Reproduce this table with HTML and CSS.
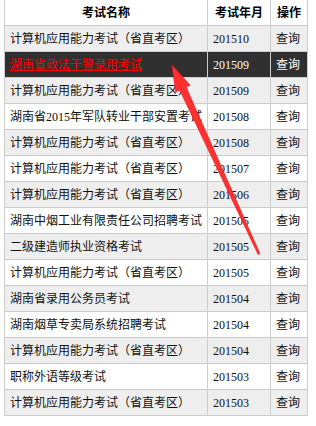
FILE: index.html
```html
<!DOCTYPE html>
<html lang="zh-CN">
<head>
<meta charset="utf-8">
<title>考试查询</title>
<link rel="stylesheet" href="styles.css">
</head>
<body>
<table class="exam-table">
  <colgroup>
    <col class="col-name">
    <col class="col-date">
    <col class="col-op">
  </colgroup>
  <thead>
    <tr><th>考试名称</th><th>考试年月</th><th>操作</th></tr>
  </thead>
  <tbody>
    <tr class="alt"><td><div class="name">计算机应用能力考试（省直考区）</div></td><td>201510</td><td>查询</td></tr>
    <tr class="active"><td><div class="name"><a class="link" href="#">湖南省政法干警录用考试</a></div></td><td>201509</td><td>查询</td></tr>
    <tr class="alt"><td><div class="name">计算机应用能力考试（省直考区）</div></td><td>201509</td><td>查询</td></tr>
    <tr><td><div class="name">湖南省2015年军队转业干部安置考试</div></td><td>201508</td><td>查询</td></tr>
    <tr class="alt"><td><div class="name">计算机应用能力考试（省直考区）</div></td><td>201508</td><td>查询</td></tr>
    <tr><td><div class="name">计算机应用能力考试（省直考区）</div></td><td>201507</td><td>查询</td></tr>
    <tr class="alt"><td><div class="name">计算机应用能力考试（省直考区）</div></td><td>201506</td><td>查询</td></tr>
    <tr><td><div class="name">湖南中烟工业有限责任公司招聘考试</div></td><td>201505</td><td>查询</td></tr>
    <tr class="alt"><td><div class="name">二级建造师执业资格考试</div></td><td>201505</td><td>查询</td></tr>
    <tr><td><div class="name">计算机应用能力考试（省直考区）</div></td><td>201505</td><td>查询</td></tr>
    <tr class="alt"><td><div class="name">湖南省录用公务员考试</div></td><td>201504</td><td>查询</td></tr>
    <tr><td><div class="name">湖南烟草专卖局系统招聘考试</div></td><td>201504</td><td>查询</td></tr>
    <tr class="alt"><td><div class="name">计算机应用能力考试（省直考区）</div></td><td>201504</td><td>查询</td></tr>
    <tr><td><div class="name">职称外语等级考试</div></td><td>201503</td><td>查询</td></tr>
    <tr class="alt"><td><div class="name">计算机应用能力考试（省直考区）</div></td><td>201503</td><td>查询</td></tr>
  </tbody>
</table>
<svg class="arrow" width="316" height="426" viewBox="0 0 316 426" aria-hidden="true">
  <polygon points="172,65 190.2,85.3 186.1,87.1 259.9,253.6 258.1,254.4 179.7,90.1 175.6,91.9" fill="#ff3030" stroke="#e01818" stroke-width="0.6" stroke-linejoin="round"/>
</svg>
</body>
</html>
```
FILE: styles.css
```css
html, body {
  margin: 0;
  padding: 0;
  background: #fff;
}
body {
  padding-left: 4px;
  position: relative;
  width: 316px;
  height: 426px;
  overflow: hidden;
  box-sizing: border-box;
}
.exam-table {
  margin-top: -1px;
  table-layout: fixed;
  width: 304px;
  border-collapse: separate;
  border-spacing: 1px;
  background: #cccccc;
  font-family: "Liberation Serif", "Noto Sans CJK SC", sans-serif;
  font-size: 12px;
  color: #111;
}
.col-name { width: 202px; }
.col-date { width: 62px; }
.col-op { width: 36px; }
.exam-table th,
.exam-table td {
  height: 25px;
  padding: 0 0 0 5px;
  line-height: 16px;
  vertical-align: middle;
  background: #fff;
  white-space: nowrap;
  overflow: hidden;
}
.exam-table th {
  padding: 0;
  text-align: center;
  font-weight: bold;
  color: #000;
}
.exam-table td {
  text-align: left;
}
.exam-table tr.alt td {
  background: #eeeeee;
}
.exam-table tr.active td {
  background: #303030;
  color: #fff;
}
.name {
  overflow: hidden;
  white-space: nowrap;
  margin-right: 3px;
}
.link {
  color: #ff0000;
  text-decoration: underline;
}
.arrow {
  position: absolute;
  left: 0;
  top: 0;
  pointer-events: none;
}
```
